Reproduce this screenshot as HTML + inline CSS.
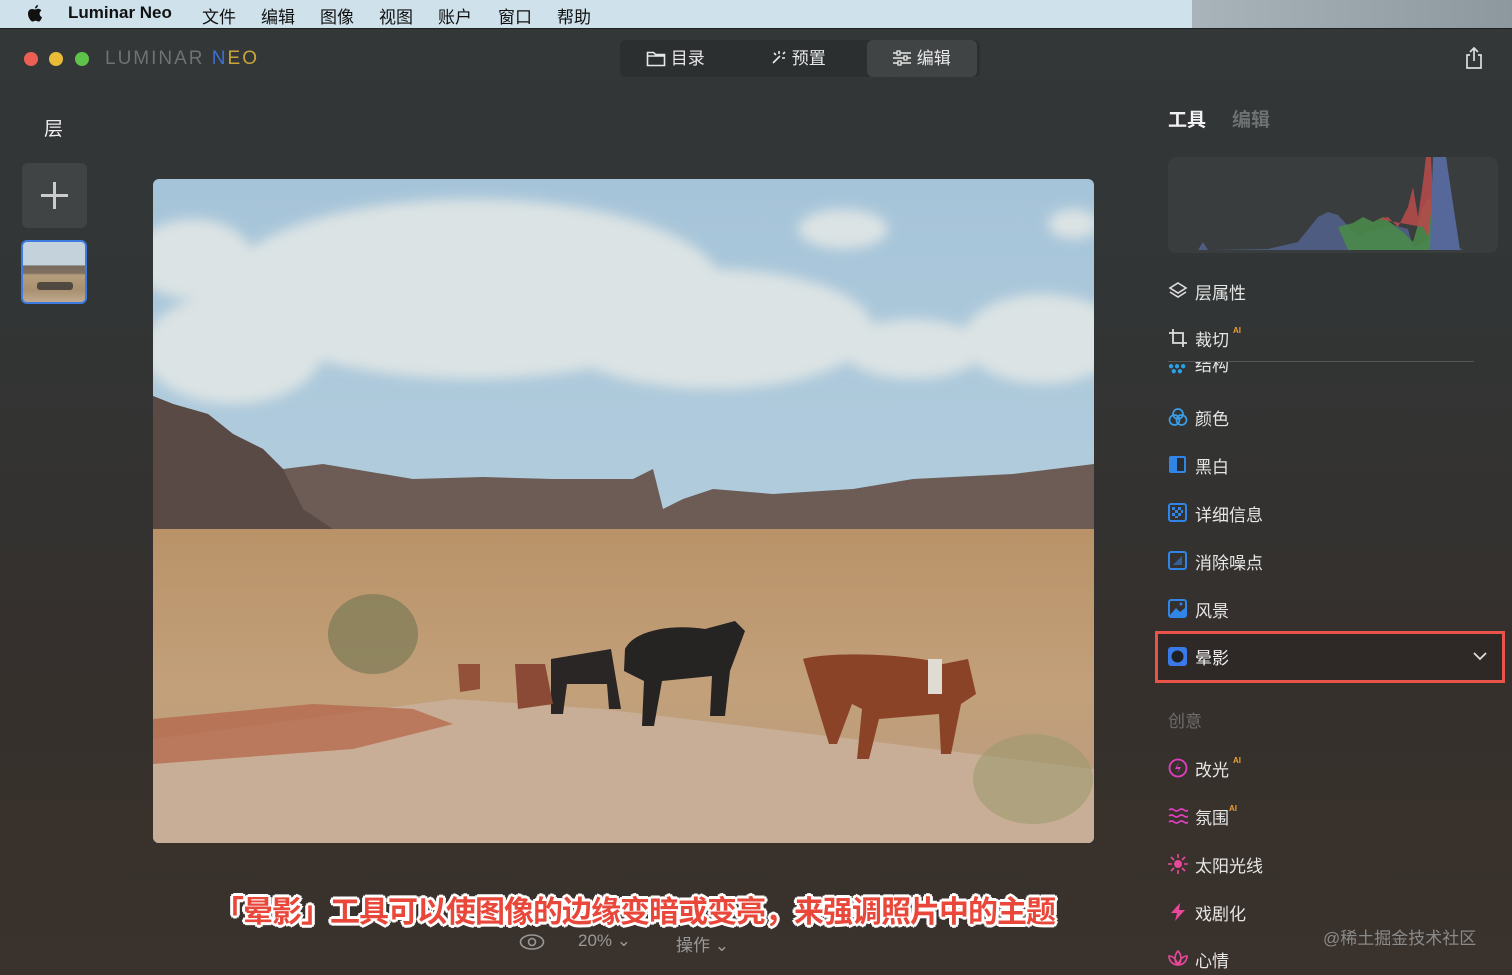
<!DOCTYPE html>
<html><head><meta charset="utf-8">
<style>
*{margin:0;padding:0;box-sizing:border-box}
body{width:1512px;height:975px;overflow:hidden;font-family:"Liberation Sans","Noto Sans CJK SC",sans-serif;background:#3a3431;position:relative}
.menubar{position:absolute;left:0;top:0;width:1512px;height:28px;background:#cfe2ec}
.menubar .right{position:absolute;left:1192px;top:0;width:320px;height:28px;background:linear-gradient(90deg,#a9b4ba,#8d989e)}
.menubar span{position:absolute;top:3px;font-size:17px;color:#111}
.app{position:absolute;left:0;top:28px;width:1512px;height:947px;background:linear-gradient(180deg,#333738 0%,#323535 30%,#35302d 65%,#3a322c 100%);border-top:1px solid #222}
.dot{position:absolute;top:23px;width:14px;height:14px;border-radius:50%}
.logo{position:absolute;left:105px;top:19px;font-size:19px;letter-spacing:2px;color:#6f7273;font-weight:normal}
.tabs{position:absolute;left:620px;top:11px;width:360px;height:37px;background:#2c2f30;border-radius:6px}
.tab{position:absolute;top:0;height:37px;color:#e8e8e8;font-size:17px;line-height:37px}
.sel{background:#404445;border-radius:6px}
.side{position:absolute;left:1168px;font-size:17px;color:#e6e6e6}
.ic{position:absolute;left:1168px}
.ai{font-size:8px;color:#f0a030;font-weight:bold;vertical-align:top;margin-left:4px}
</style></head><body>
<div class="menubar"><div class="right"></div>
<svg style="position:absolute;left:26px;top:4px" width="18" height="20" viewBox="0 0 18 20"><path d="M12 1c0 2-1.5 3.5-3 3.5C9 2.5 10.5 1 12 1zM9 5.5c1 0 2-.8 3.2-.8 1.3 0 2.5.7 3.2 1.8-2.8 1.6-2.3 5.6.6 6.7-.6 1.8-1.9 4.4-3.4 4.4-1.2 0-1.5-.8-3-.8s-1.9.8-3 .8C4.8 17.6 2 13.5 2 9.8 2 6.5 4 5 6 5c1.2 0 2.1.5 3 .5z" fill="#111"/></svg>
<span style="left:68px;font-weight:bold">Luminar Neo</span>
<span style="left:202px">文件</span><span style="left:261px">编辑</span><span style="left:320px">图像</span><span style="left:379px">视图</span><span style="left:438px">账户</span><span style="left:498px">窗口</span><span style="left:557px">帮助</span>
</div>
<div class="app">
<div class="dot" style="left:24px;background:#ec5f55"></div>
<div class="dot" style="left:49px;background:#e9bb36"></div>
<div class="dot" style="left:75px;background:#5fc24a"></div>
<div class="logo">LUMINAR <span style="color:#3f6fd0">N</span><span style="color:#c9a43a">EO</span></div>
<div class="tabs">
<div class="tab" style="left:26px"><svg style="vertical-align:-3px" width="20" height="17" viewBox="0 0 20 17"><path d="M1.5 2.5h6l2 2h9v11h-17z M1.5 6h17" fill="none" stroke="#e8e8e8" stroke-width="1.6"/></svg> 目录</div>
<div class="tab" style="left:150px"><svg style="vertical-align:-2px" width="17" height="17" viewBox="0 0 17 17"><path d="M3 14l7-7M9 2v3M13 5l2-2M12 9h3M4 4l2 2" stroke="#e8e8e8" stroke-width="1.6" fill="none"/></svg> 预置</div>
<div class="tab sel" style="left:247px;width:110px;padding-left:25px"><svg style="vertical-align:-2px" width="20" height="16" viewBox="0 0 20 16"><path d="M1 3h18M1 8h18M1 13h18" stroke="#e8e8e8" stroke-width="1.5"/><rect x="5" y="1" width="3" height="4" fill="#404445" stroke="#e8e8e8" stroke-width="1.3"/><rect x="12" y="6" width="3" height="4" fill="#404445" stroke="#e8e8e8" stroke-width="1.3"/><rect x="6" y="11" width="3" height="4" fill="#404445" stroke="#e8e8e8" stroke-width="1.3"/></svg> 编辑</div>
</div>
<svg style="position:absolute;left:1464px;top:17px" width="20" height="24" viewBox="0 0 20 24"><path d="M6 9H3v13h14V9h-3M10 15V2M6 6l4-4 4 4" fill="none" stroke="#ddd" stroke-width="1.7"/></svg>

<div style="position:absolute;left:44px;top:85px;font-size:19px;color:#eee">层</div>
<div style="position:absolute;left:22px;top:134px;width:65px;height:65px;background:#404445;border-radius:6px"><div style="position:absolute;left:19px;top:31px;width:27px;height:3px;background:#ccc"></div><div style="position:absolute;left:31px;top:19px;width:3px;height:27px;background:#ccc"></div></div>
<div style="position:absolute;left:21px;top:211px;width:66px;height:64px;border:2px solid #3d7be0;border-radius:6px;overflow:hidden;background:linear-gradient(180deg,#c4d2dc 0%,#c4d2dc 38%,#766a60 40%,#807060 52%,#b59e7c 55%,#a89070 80%,#c0aa90 100%)"><div style="position:absolute;left:14px;top:40px;width:36px;height:8px;background:#3a3533;border-radius:3px;opacity:.8"></div></div>

<svg style="position:absolute;left:153px;top:150px;border-radius:6px" width="941" height="664" viewBox="0 0 941 664">
<defs><linearGradient id="sky" x1="0" y1="0" x2="0" y2="1"><stop offset="0" stop-color="#a6c4d9"/><stop offset="1" stop-color="#bcd5e0"/></linearGradient>
<linearGradient id="des" x1="0" y1="0" x2="0" y2="1"><stop offset="0" stop-color="#b99268"/><stop offset=".5" stop-color="#c2a07a"/><stop offset="1" stop-color="#b89a80"/></linearGradient>
<filter id="b"><feGaussianBlur stdDeviation="6"/></filter></defs>
<rect width="941" height="664" fill="url(#sky)"/>
<g fill="#dbe3e4" filter="url(#b)">
<ellipse cx="320" cy="110" rx="250" ry="90"/><ellipse cx="560" cy="150" rx="160" ry="60"/>
<ellipse cx="40" cy="80" rx="60" ry="40"/><ellipse cx="80" cy="170" rx="90" ry="55"/>
<ellipse cx="690" cy="50" rx="45" ry="20"/><ellipse cx="890" cy="160" rx="80" ry="45"/><ellipse cx="920" cy="45" rx="25" ry="15"/>
<ellipse cx="760" cy="170" rx="70" ry="30"/></g>
<polygon points="0,217 20,225 55,235 80,255 110,270 130,290 170,285 200,290 260,300 330,298 400,300 480,300 500,290 510,330 530,320 560,310 620,315 700,310 760,300 860,295 941,285 941,360 0,360" fill="#6c5c55"/>
<polygon points="0,217 20,225 55,235 80,255 110,270 130,290 150,330 180,350 0,360" fill="#5a4a45"/>
<rect x="0" y="350" width="941" height="314" fill="url(#des)"/>
<polygon points="0,560 150,540 300,520 450,530 700,560 941,590 941,664 0,664" fill="#c8ae96"/>
<polygon points="0,540 160,525 260,530 300,545 200,570 0,585" fill="#b5664a" opacity=".75"/>
<ellipse cx="220" cy="455" rx="45" ry="40" fill="#7b7a55" opacity=".7"/>
<ellipse cx="880" cy="600" rx="60" ry="45" fill="#9d9a70" opacity=".6"/>
<path d="M472 470 c10-20 50-25 80-20 l30-8 10 10 -15 40 -5 45 -15 0 2-40 -50 5 -8 45 -12 0 2-45 -20-10z" fill="#262323"/>
<path d="M398 480 l60-10 10 60-12 0-2-25-40 0-4 30-12 0z" fill="#2a2626"/>
<path d="M362 485 l30 0 8 40-35 5z" fill="#8a4a35"/>
<path d="M305 485 l22 0 0 25-20 3z" fill="#93513a"/>
<path d="M650 480 c30-8 110-5 140 5 l25-5 8 35-15 10-10 50-10 0-2-40-60 5-10 40-12 0 5-50-10-5 -15 40-8 0z" fill="#8b4328"/>
<rect x="775" y="480" width="14" height="35" fill="#e0dcd4"/>
</svg>

<div style="position:absolute;left:214px;top:858px;font-size:30px;font-weight:bold;color:#e8473a;text-shadow:2px 2px 0 #fff,-2px -2px 0 #fff,2px -2px 0 #fff,-2px 2px 0 #fff,0 3px 0 #fff,0 -3px 0 #fff,3px 0 0 #fff,-3px 0 0 #fff;letter-spacing:-1px">「晕影」工具可以使图像的边缘变暗或变亮，来强调照片中的主题</div>
<svg style="position:absolute;left:519px;top:904px" width="26" height="18" viewBox="0 0 26 18"><ellipse cx="13" cy="9" rx="11.5" ry="7" fill="none" stroke="#999" stroke-width="1.6"/><circle cx="13" cy="9" r="3.5" fill="none" stroke="#999" stroke-width="1.6"/></svg>
<div style="position:absolute;left:578px;top:902px;font-size:17px;color:#999">20% ⌄</div>
<div style="position:absolute;left:676px;top:902px;font-size:17px;color:#999">操作 ⌄</div>

<div class="side" style="top:76px;font-size:19px;font-weight:bold;color:#f2f2f2">工具</div>
<div class="side" style="left:1232px;top:76px;font-size:19px;font-weight:bold;color:#6e7172">编辑</div>
<svg style="position:absolute;left:1168px;top:128px" width="330" height="96" viewBox="0 0 330 96">
<rect width="330" height="96" rx="8" fill="#3a3d3e"/>
<path d="M8 93 L30 93 L35 85 L40 93 L100 92 L130 85 L150 60 L160 55 L170 58 L190 80 L200 75 L215 70 L225 68 L240 72 L245 90 L258 85 L262 70 L265 35 L272 0 L278 0 L282 40 L290 90 L295 93 Z" fill="#4f5e86" opacity=".95"/>
<path d="M170 70 L185 66 L195 60 L205 65 L215 60 L235 75 L245 85 L255 50 L262 40 L265 60 L268 0 L272 0 L275 93 L180 93 Z" fill="#4a8a4a" opacity=".9"/>
<path d="M210 62 L220 60 L230 70 L240 50 L245 30 L250 60 L255 25 L258 0 L263 0 L265 40 L260 80 L255 70 Z" fill="#b54a4a" opacity=".9"/>
<path d="M265 0 L278 0 L284 40 L292 93 L262 93Z" fill="#56689a"/>
</svg>
<svg class="ic" style="top:252px" width="20" height="20" viewBox="0 0 20 20"><path d="M10 2l8 5-8 5-8-5z M2 11l8 5 8-5" fill="none" stroke="#ddd" stroke-width="1.6"/></svg>
<div class="side" style="left:1195px;top:250px">层属性</div>
<svg class="ic" style="top:299px" width="20" height="20" viewBox="0 0 20 20"><path d="M5 1v14h14M1 5h14v14" fill="none" stroke="#ddd" stroke-width="1.8"/></svg>
<div class="side" style="left:1195px;top:297px">裁切<span class="ai">AI</span></div>
<div style="position:absolute;left:1168px;top:332px;width:306px;height:1px;background:#555"></div>
<div style="position:absolute;left:1160px;top:333px;width:320px;height:16px;overflow:hidden"><div class="side" style="left:35px;top:-11px">结构<span class="ai" style="color:#aaa">...</span></div><div style="position:absolute;left:8px;top:2px;color:#2aa0e8;font-size:10px;line-height:5px">●●●<br>&nbsp;●●</div></div>
<svg class="ic" style="top:378px" width="20" height="20" viewBox="0 0 20 20"><g fill="none" stroke="#3a9de6" stroke-width="1.7"><circle cx="10" cy="7" r="5"/><circle cx="6.5" cy="13" r="5"/><circle cx="13.5" cy="13" r="5"/></g></svg>
<div class="side" style="left:1195px;top:376px">颜色</div>
<svg class="ic" style="top:426px" width="19" height="19" viewBox="0 0 19 19"><rect x="1" y="1" width="17" height="17" rx="2" fill="#2f86e8"/><rect x="9" y="3" width="7" height="13" fill="#2a2c2d"/></svg>
<div class="side" style="left:1195px;top:424px">黑白</div>
<svg class="ic" style="top:474px" width="19" height="19" viewBox="0 0 19 19"><rect x="1" y="1" width="17" height="17" rx="2" fill="none" stroke="#2f86e8" stroke-width="2"/><path d="M4 4h3v3H4zM10 4h3v3h-3zM7 7h3v3H7zM13 7h2v3h-2zM4 10h3v3H4zM10 10h3v3h-3zM7 13h3v2H7z" fill="#2f86e8"/></svg>
<div class="side" style="left:1195px;top:472px">详细信息</div>
<svg class="ic" style="top:522px" width="19" height="19" viewBox="0 0 19 19"><rect x="1" y="1" width="17" height="17" rx="2" fill="none" stroke="#2f86e8" stroke-width="2"/><path d="M5 14L14 5v9z" fill="#2f86e8" opacity=".6"/></svg>
<div class="side" style="left:1195px;top:520px">消除噪点</div>
<svg class="ic" style="top:570px" width="19" height="19" viewBox="0 0 19 19"><rect x="1" y="1" width="17" height="17" rx="2" fill="none" stroke="#2f86e8" stroke-width="2"/><path d="M2 16l6-7 4 4 5-4v8H2z" fill="#2f86e8"/><circle cx="13" cy="5" r="1.5" fill="#2f86e8"/></svg>
<div class="side" style="left:1195px;top:568px">风景</div>
<div style="position:absolute;left:1155px;top:602px;width:350px;height:52px;border:3px solid #ea5448;background:#2e2927"></div>
<svg class="ic" style="top:618px" width="19" height="19" viewBox="0 0 19 19"><rect x="0" y="0" width="19" height="19" rx="3" fill="#3a7ae8"/><circle cx="9.5" cy="9.5" r="6" fill="#1f2024"/></svg>
<div class="side" style="left:1195px;top:615px;color:#f2f2f2">晕影</div>
<svg style="position:absolute;left:1473px;top:622px" width="14" height="10" viewBox="0 0 14 10"><path d="M1 2l6 6 6-6" fill="none" stroke="#ddd" stroke-width="1.8"/></svg>
<div class="side" style="top:678px;color:#6c6c6c">创意</div>
<svg class="ic" style="top:729px" width="20" height="20" viewBox="0 0 20 20"><circle cx="10" cy="10" r="8.5" fill="none" stroke="#e040c0" stroke-width="1.8"/><path d="M11 4l-4 7h4l-2 5 4-7H9z" fill="#e040c0"/></svg>
<div class="side" style="left:1195px;top:727px">改光<span class="ai">AI</span></div>
<svg class="ic" style="top:778px" width="20" height="18" viewBox="0 0 20 18"><path d="M1 3q2.5-2 5 0t5 0 5 0 4 0M1 9q2.5-2 5 0t5 0 5 0 4 0M1 15q2.5-2 5 0t5 0 5 0 4 0" fill="none" stroke="#e040c0" stroke-width="1.7"/></svg>
<div class="side" style="left:1195px;top:775px">氛围<span class="ai" style="margin-left:0">AI</span></div>
<svg class="ic" style="top:825px" width="20" height="20" viewBox="0 0 20 20"><circle cx="10" cy="10" r="4" fill="#e8489a"/><path d="M10 0v4M10 16v4M0 10h4M16 10h4M3 3l3 3M14 14l3 3M17 3l-3 3M3 17l3-3" stroke="#e8489a" stroke-width="1.6"/></svg>
<div class="side" style="left:1195px;top:823px">太阳光线</div>
<svg class="ic" style="top:873px" width="20" height="20" viewBox="0 0 20 20"><path d="M12 1L3 11h6l-2 8 10-11h-6z" fill="#e8489a"/></svg>
<div class="side" style="left:1195px;top:871px">戏剧化</div>
<div style="position:absolute;left:1323px;top:895px;font-size:17px;color:#8a8a8a">@稀土掘金技术社区</div>
<svg class="ic" style="top:920px" width="20" height="18" viewBox="0 0 20 18"><path d="M10 16C6 13 6 6 10 2c4 4 4 11 0 14zM10 16C5 16 1 12 1 7c4 0 7 3 9 9zM10 16c5 0 9-4 9-9-4 0-7 3-9 9z" fill="none" stroke="#e8489a" stroke-width="1.6"/></svg>
<div class="side" style="left:1195px;top:918px">心情</div>
</div>
</body></html>
